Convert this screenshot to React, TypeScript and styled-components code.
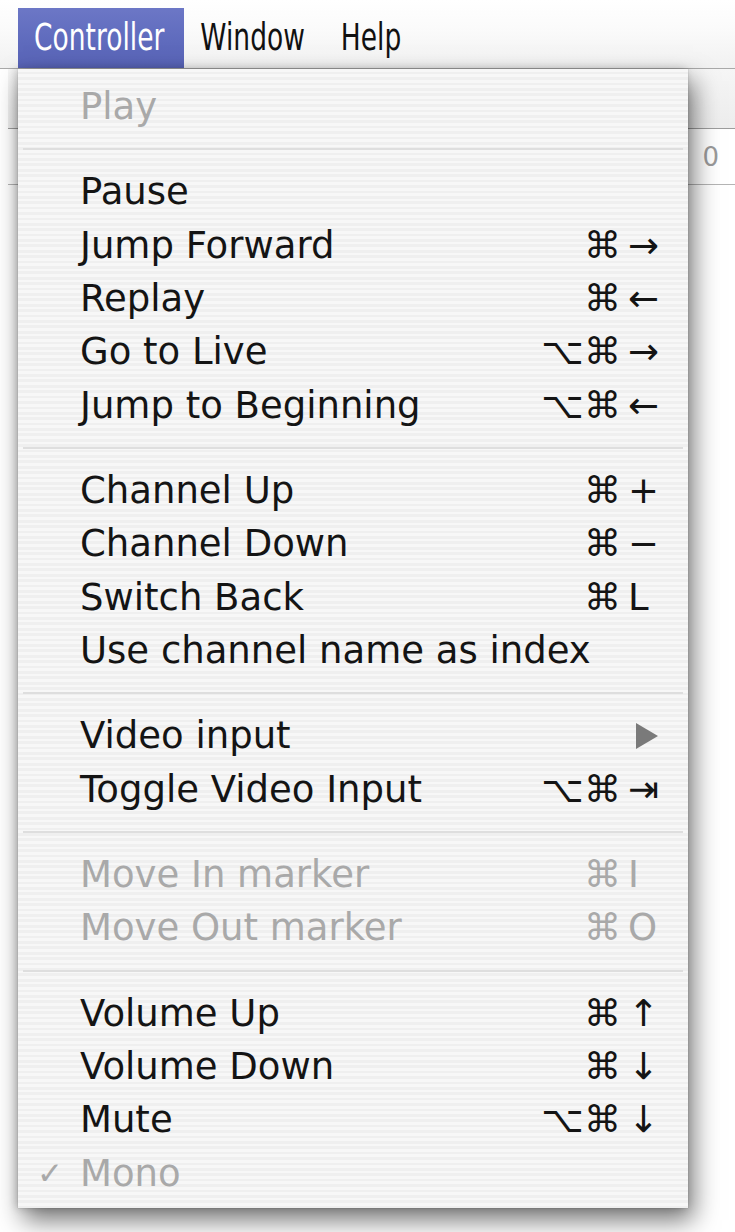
import React from "react";
import styled, { createGlobalStyle } from "styled-components";

const GlobalStyle = createGlobalStyle`
  html, body {
    margin: 0;
    padding: 0;
    background: #ffffff;
  }
  body {
    font-family: "DejaVu Sans", "Liberation Sans", sans-serif;
  }
`;

type Item = {
  label: string;
  mods?: string;
  shortcut?: string;
  disabled?: boolean;
  checked?: boolean;
  submenu?: boolean;
};

const SECTIONS: Item[][] = [
  [{ label: "Play", disabled: true }],
  [
    { label: "Pause" },
    { label: "Jump Forward", mods: "⌘", shortcut: "→" },
    { label: "Replay", mods: "⌘", shortcut: "←" },
    { label: "Go to Live", mods: "⌥⌘", shortcut: "→" },
    { label: "Jump to Beginning", mods: "⌥⌘", shortcut: "←" },
  ],
  [
    { label: "Channel Up", mods: "⌘", shortcut: "+" },
    { label: "Channel Down", mods: "⌘", shortcut: "−" },
    { label: "Switch Back", mods: "⌘", shortcut: "L" },
    { label: "Use channel name as index" },
  ],
  [
    { label: "Video input", submenu: true },
    { label: "Toggle Video Input", mods: "⌥⌘", shortcut: "⇥" },
  ],
  [
    { label: "Move In marker", mods: "⌘", shortcut: "I", disabled: true },
    { label: "Move Out marker", mods: "⌘", shortcut: "O", disabled: true },
  ],
  [
    { label: "Volume Up", mods: "⌘", shortcut: "↑" },
    { label: "Volume Down", mods: "⌘", shortcut: "↓" },
    { label: "Mute", mods: "⌥⌘", shortcut: "↓" },
    { label: "Mono", checked: true, disabled: true },
  ],
];

const Screen = styled.div`
  position: relative;
  width: 735px;
  height: 1232px;
  overflow: hidden;
  background: #ffffff;
`;

const MenuBar = styled.div`
  display: flex;
  align-items: flex-end;
  height: 69px;
  box-sizing: border-box;
  padding-left: 18px;
  background: linear-gradient(to bottom, #ffffff 0%, #fbfbfb 40%, #f1f1f1 100%);
  border-bottom: 1px solid #a9a9a9;
`;

const MenuTitle = styled.div<{ $active?: boolean }>`
  display: flex;
  align-items: center;
  height: 60px;
  padding: 0 20px 0 16px;
  color: ${(p) => (p.$active ? "#ffffff" : "#111111")};
  background: ${(p) =>
    p.$active
      ? "linear-gradient(to bottom, #6c77c6 0%, #5f6bbd 55%, #5863b6 100%)"
      : "transparent"};
`;

const TitleLabel = styled.span`
  display: inline-block;
  font-size: 26.5px;
  line-height: 1;
  transform: scaleY(1.39);
  transform-origin: center;
`;

const Backdrop = styled.div`
  margin-left: 8px;
  display: flex;
  flex-direction: column;
`;

const Toolbar = styled.div`
  height: 59px;
  background: linear-gradient(to bottom, #f6f6f6, #ededed);
  border-bottom: 1px solid #9d9d9d;
`;

const TableRow = styled.div`
  height: 55px;
  display: flex;
  align-items: center;
  justify-content: flex-end;
  padding-right: 16px;
  border-bottom: 1px solid #b4b4b4;
  font-size: 26px;
  color: #9a9a9a;
`;

const Menu = styled.div`
  position: absolute;
  left: 18px;
  top: 69px;
  width: 670px;
  height: 1139px;
  box-sizing: border-box;
  padding: 11px 0 8px;
  display: flex;
  flex-direction: column;
  background: repeating-linear-gradient(
    to bottom,
    #f7f7f7 0px,
    #f7f7f7 2.7px,
    #efefef 2.7px,
    #efefef 5.4px
  );
  box-shadow: 5px 12px 24px rgba(0, 0, 0, 0.55), -2px 0 8px rgba(0, 0, 0, 0.18),
    0 0 1px rgba(0, 0, 0, 0.25);
`;

const Separator = styled.div`
  height: 32px;
  display: flex;
  align-items: center;
  padding: 0 5px;
  &::after {
    content: "";
    flex: 1;
    height: 2px;
    background: #dedede;
  }
`;

const Row = styled.div<{ $disabled?: boolean }>`
  display: grid;
  grid-template-columns: 62px minmax(0, 1fr) 120px 67px;
  height: 53.33px;
  line-height: 53.33px;
  font-size: 37px;
  white-space: nowrap;
  color: ${(p) => (p.$disabled ? "#a9a9a9" : "#141414")};
`;

const Check = styled.span`
  padding-left: 19px;
  font-size: 31px;
`;

const Label = styled.span`
  overflow: visible;
`;

const Mods = styled.span`
  text-align: right;
`;

const Key = styled.span`
  padding-left: 7px;
`;

const SubmenuArrow = styled.span`
  display: inline-block;
  margin-left: 8px;
  margin-top: 14px;
  width: 0;
  height: 0;
  border-left: 22px solid #7a7a7a;
  border-top: 13px solid transparent;
  border-bottom: 13px solid transparent;
  vertical-align: top;
`;

function MenuRow({ item }: { item: Item }) {
  return (
    <Row $disabled={item.disabled}>
      <Check>{item.checked ? "✓" : ""}</Check>
      <Label>{item.label}</Label>
      <Mods>{item.mods}</Mods>
      <Key>{item.submenu ? <SubmenuArrow /> : item.shortcut}</Key>
    </Row>
  );
}

export default function App() {
  return (
    <Screen>
      <GlobalStyle />
      <MenuBar>
        <MenuTitle $active>
          <TitleLabel>Controller</TitleLabel>
        </MenuTitle>
        <MenuTitle>
          <TitleLabel>Window</TitleLabel>
        </MenuTitle>
        <MenuTitle>
          <TitleLabel>Help</TitleLabel>
        </MenuTitle>
      </MenuBar>
      <Backdrop>
        <Toolbar />
        <TableRow>0</TableRow>
      </Backdrop>
      <Menu>
        {SECTIONS.map((section, i) => (
          <React.Fragment key={i}>
            {i > 0 && <Separator />}
            {section.map((item) => (
              <MenuRow key={item.label} item={item} />
            ))}
          </React.Fragment>
        ))}
      </Menu>
    </Screen>
  );
}
